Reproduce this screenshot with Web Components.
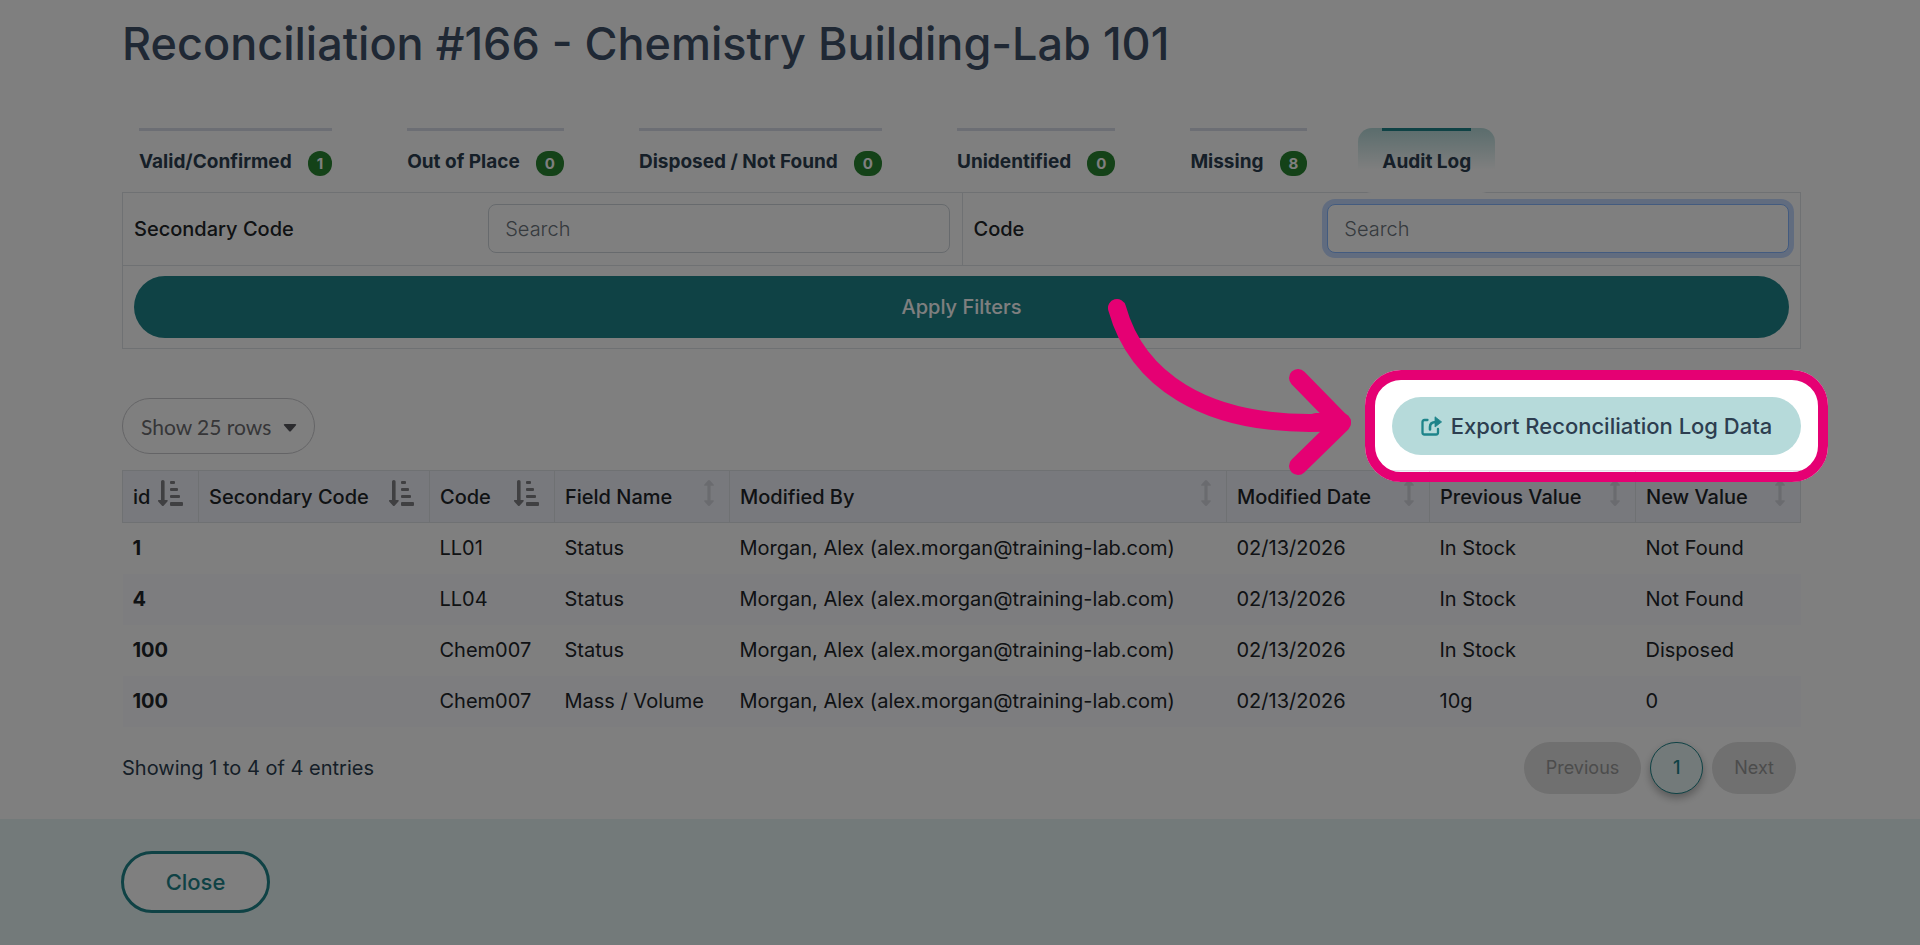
<!DOCTYPE html>
<html lang="en">
<head>
<meta charset="utf-8">
<title>Reconciliation #166</title>
<style>
  :root {
    --teal: #1e848a;
    --teal-light: #b6dada;
    --teal-pale: #e7f4f4;
    --ink: #2d3e50;
    --text: #212529;
    --line: #dee2e6;
    --marker: #e50073;
  }

  body {
    margin: 0;
    background: #ffffff;
    color: var(--text);
    font: 20px/24px Inter, "Liberation Sans", sans-serif;
  }
</style>
</head>
<body>

<reconciliation-page>
  <span slot="title">Reconciliation #166 - Chemistry Building-Lab 101</span>

  <tab-bar slot="tabs">
    <tab-item count="1">Valid/Confirmed</tab-item>
    <tab-item count="0">Out of Place</tab-item>
    <tab-item count="0">Disposed / Not Found</tab-item>
    <tab-item count="0">Unidentified</tab-item>
    <tab-item count="8">Missing</tab-item>
    <tab-item active>Audit Log</tab-item>
  </tab-bar>

  <filter-panel slot="filters">
    <filter-field label="Secondary Code"></filter-field>
    <filter-field label="Code" focused></filter-field>
  </filter-panel>

  <rows-select slot="toolbar"></rows-select>
  <tour-spotlight slot="toolbar">
    <export-button>Export Reconciliation Log Data</export-button>
  </tour-spotlight>

  <log-table slot="table"></log-table>

  <span slot="status">Showing 1 to 4 of 4 entries</span>
  <page-nav slot="status"></page-nav>

  <close-button slot="footer">Close</close-button>
</reconciliation-page>

<script>
class ReconciliationPage extends HTMLElement {
  constructor() {
    super();

    this.attachShadow({mode: 'open'}).innerHTML = `
      <style>
        :host {
          display: block;
        }

        main {
          padding: 14px 119px 25px 122px;
        }

        h1 {
          margin: 0 0 54px;
          font-size: 45px;
          line-height: 60px;
          font-weight: 500;
          color: #3f5068;
        }

        .toolbar {
          display: flex;
          justify-content: space-between;
          align-items: center;
          margin: 48px 0 15px;
        }

        .status {
          display: flex;
          justify-content: space-between;
          align-items: center;
          padding: 15px 5px 0 0;
          color: var(--ink);
        }

        footer {
          padding: 32px 121px;
          background: var(--teal-pale);
        }
      </style>

      <main>
        <h1><slot name="title"></slot></h1>
        <slot name="tabs"></slot>
        <slot name="filters"></slot>
        <div class="toolbar"><slot name="toolbar"></slot></div>
        <slot name="table"></slot>
        <div class="status"><slot name="status"></slot></div>
      </main>
      <footer><slot name="footer"></slot></footer>
    `;
  }
}

class TabBar extends HTMLElement {
  constructor() {
    super();

    this.attachShadow({mode: 'open'}).innerHTML = `
      <style>
        :host {
          display: block;
        }

        nav {
          display: flex;
          gap: 27px;
          margin: 0 0 -1px -7px;
        }
      </style>
      <nav><slot></slot></nav>
    `;
  }
}

class TabItem extends HTMLElement {
  constructor() {
    super();

    const count = this.getAttribute('count');
    const badge = count === null ? '' : `<span class="badge">${count}</span>`;

    this.attachShadow({mode: 'open'}).innerHTML = `
      <style>
        :host {
          display: block;
          position: relative;
          height: 65px;
          padding: 0 24px;
          border-radius: 14px;
          box-sizing: border-box;
        }

        :host([active]) {
          background: linear-gradient(var(--teal-light), #ffffff 42px);
        }

        a {
          display: flex;
          align-items: flex-start;
          gap: 16px;
          padding-top: 19px;
          border-top: 3px solid #d9dde8;
          color: var(--ink);
          font-weight: 700;
          font-size: 19px;
          line-height: 24px;
          text-decoration: none;
          white-space: nowrap;
        }

        :host([active]) a {
          border-color: var(--teal);
        }

        .badge {
          padding: 0 9px;
          margin-top: 1px;
          border-radius: 12px;
          background: #288430;
          color: #ffffff;
          font-size: 15px;
          line-height: 25px;
        }
      </style>
      <a href="#"><slot></slot>${badge}</a>
    `;
  }
}

class FilterPanel extends HTMLElement {
  constructor() {
    super();

    this.attachShadow({mode: 'open'}).innerHTML = `
      <style>
        :host {
          display: block;
          border: 1px solid var(--line);
        }

        .fields {
          display: grid;
          grid-template-columns: 1fr 1fr;
          border-bottom: 1px solid var(--line);
        }

        ::slotted(:not(:first-child)) {
          border-left: 1px solid var(--line);
        }

        .apply {
          padding: 10px 11px;
        }

        button {
          display: block;
          width: 100%;
          height: 62px;
          border: 0;
          border-radius: 31px;
          background: var(--teal);
          color: #ffffff;
          font: inherit;
          font-weight: 500;
          cursor: pointer;
        }
      </style>
      <div class="fields"><slot></slot></div>
      <div class="apply"><button type="button">Apply Filters</button></div>
    `;
  }
}

class FilterField extends HTMLElement {
  constructor() {
    super();

    this.attachShadow({mode: 'open'}).innerHTML = `
      <style>
        :host {
          display: grid;
          grid-template-columns: 5fr 7fr;
          gap: 24px;
          align-items: center;
          padding: 11px 11px 12px;
        }

        label {
          font-weight: 500;
        }

        input {
          width: 100%;
          height: 49px;
          padding: 0 16px;
          box-sizing: border-box;
          border: 1px solid #ced4da;
          border-radius: 8px;
          background: #ffffff;
          color: var(--text);
          font: inherit;
          outline: none;
        }

        input::placeholder {
          color: #6c757d;
          font-weight: 300;
        }

        :host([focused]) input {
          border-color: #86b7fe;
          box-shadow: 0 0 0 5px #c3d9ff;
        }
      </style>
      <label for="field">${this.getAttribute('label')}</label>
      <input id="field" type="text" placeholder="Search">
    `;
  }
}

class RowsSelect extends HTMLElement {
  constructor() {
    super();

    this.attachShadow({mode: 'open'}).innerHTML = `
      <style>
        :host {
          display: grid;
          align-items: center;
        }

        select,
        svg {
          grid-area: 1 / 1;
        }

        select {
          appearance: none;
          width: 193px;
          height: 56px;
          padding: 0 18px;
          border: 1px solid #c9c9cd;
          border-radius: 28px;
          background: #ffffff;
          color: #6c6c70;
          font: 21px Lato, sans-serif;
        }

        svg {
          justify-self: end;
          margin: 3px 18px 0 0;
          pointer-events: none;
        }
      </style>
      <select aria-label="Rows per page">
        <option>Show 25 rows</option>
        <option>Show 50 rows</option>
        <option>Show 100 rows</option>
      </select>
      <svg width="14" height="8" viewBox="0 0 14 8"><path d="M2 0h10q2 0 .8 1.500l-4.800 5.600q-1 1-2 0l-4.800-5.600q-1.200-1.500.8-1.500z" fill="#57575d"/></svg>
    `;
  }
}

class ExportButton extends HTMLElement {
  constructor() {
    super();

    this.attachShadow({mode: 'open'}).innerHTML = `
      <style>
        :host {
          display: block;
        }

        button {
          display: flex;
          align-items: center;
          justify-content: center;
          gap: 9px;
          min-width: 409px;
          height: 58px;
          padding: 0 27px;
          border: 0;
          border-radius: 29px;
          background: var(--teal-light);
          color: var(--ink);
          font: inherit;
          font-size: 22px;
          font-weight: 500;
          white-space: nowrap;
          cursor: pointer;
        }
      </style>
      <button type="button">
        <svg width="21" height="20" viewBox="0 0 21 20" fill="none">
          <path d="M6.500 4H3.500Q1.500 4 1.500 6v10.500q0 2 2 2H15q2 0 2-2V13" stroke="#1e848a" stroke-width="2.300" stroke-linecap="round"/>
          <path d="M9 13.500V11Q9 6 15 6" stroke="#1e848a" stroke-width="2.600" stroke-linecap="round"/>
          <path d="M14 .800v10.200l6.600-5.100z" fill="#1e848a" stroke="#1e848a" stroke-width=".8" stroke-linejoin="round"/>
        </svg>
        <slot></slot>
      </button>
    `;
  }
}

// Dims the whole page except for the slotted control and points an arrow at it
class TourSpotlight extends HTMLElement {
  constructor() {
    super();

    this.attachShadow({mode: 'open'}).innerHTML = `
      <style>
        :host {
          display: block;
          position: relative;
          z-index: 10;
        }

        .ring {
          position: absolute;
          inset: -27px;
          border: 10px solid var(--marker);
          border-radius: 36px;
          box-shadow: 0 0 0 3000px rgba(0, 0, 0, .5);
          pointer-events: none;
        }

        svg {
          position: absolute;
          right: 442px;
          top: -99px;
          pointer-events: none;
        }
      </style>
      <slot></slot>
      <div class="ring"></div>
      <svg width="252" height="180" viewBox="27 18 252 180" fill="none" stroke="#e50073" stroke-width="18" stroke-linecap="round" stroke-linejoin="round">
        <path d="M37 28C55 93 118 151 258 142"/>
        <path d="M218 98l44 45-44 43"/>
        <path d="M236 142h26"/>
      </svg>
    `;
  }
}

const AMOUNT_ICON = `
  <svg class="amount" width="25" height="26" viewBox="0 0 25 26" fill="#808084">
    <path d="M3 1.500q0-1.500 1.800-1.500t1.800 1.500v18.500h2.200q1.700 0 .6 1.400l-3.600 4q-1 1-2 0l-3.600-4q-1-1.400.6-1.400h2.200z"/>
    <rect x="12" y="1" width="5" height="3" rx="1"/>
    <rect x="12" y="8" width="8" height="3" rx="1"/>
    <rect x="12" y="15" width="10" height="3" rx="1"/>
    <rect x="12" y="22" width="13" height="4" rx="1"/>
  </svg>`;

const SORT_ICON = `
  <svg class="sort" width="10" height="26" viewBox="0 0 10 26" fill="#d5d7de">
    <path d="M5 0q.6 0 1 .5l3.600 4q.8 1.300-.6 1.300h-2.400v14.400h2.400q1.400 0 .6 1.300l-3.600 4q-1 1-2 0l-3.600-4q-.8-1.300.6-1.300h2.400v-14.400h-2.400q-1.400 0-.6-1.300l3.600-4q.4-.5 1-.5z"/>
  </svg>`;

const COLUMNS = [
  {name: 'id', width: 76, icon: AMOUNT_ICON},
  {name: 'Secondary Code', width: 231, icon: AMOUNT_ICON},
  {name: 'Code', width: 125, icon: AMOUNT_ICON},
  {name: 'Field Name', width: 175, icon: SORT_ICON},
  {name: 'Modified By', icon: SORT_ICON},
  {name: 'Modified Date', width: 203, icon: SORT_ICON},
  {name: 'Previous Value', width: 206, icon: SORT_ICON},
  {name: 'New Value', width: 165, icon: SORT_ICON}
];

const USER = 'Morgan, Alex (alex.morgan@training-lab.com)';

const ROWS = [
  ['1', '', 'LL01', 'Status', USER, '02/13/2026', 'In Stock', 'Not Found'],
  ['4', '', 'LL04', 'Status', USER, '02/13/2026', 'In Stock', 'Not Found'],
  ['100', '', 'Chem007', 'Status', USER, '02/13/2026', 'In Stock', 'Disposed'],
  ['100', '', 'Chem007', 'Mass / Volume', USER, '02/13/2026', '10g', '0']
];

class LogTable extends HTMLElement {
  constructor() {
    super();

    this.attachShadow({mode: 'open'}).innerHTML = `
      <style>
        :host {
          display: block;
        }

        table {
          width: 100%;
          table-layout: fixed;
          border-collapse: collapse;
        }

        th,
        td {
          padding: 0 10px;
          text-align: left;
          white-space: nowrap;
        }

        thead th {
          height: 51px;
          padding-right: 15px;
          border: 1px solid var(--line);
          background: #f0f2fa;
          font-weight: 500;
        }

        .head {
          display: flex;
          align-items: center;
          justify-content: space-between;
        }

        .head svg {
          flex: none;
          margin-bottom: 8px;
        }

        tbody th,
        tbody td {
          height: 49px;
          padding-bottom: 2px;
        }

        tbody th {
          font-weight: 700;
        }

        tbody tr:nth-child(even) {
          background: #fafaff;
        }
      </style>
      <table>
        <colgroup>${COLUMNS.map(this.renderCol).join('')}</colgroup>
        <thead><tr>${COLUMNS.map(this.renderHead).join('')}</tr></thead>
        <tbody>${ROWS.map(this.renderRow).join('')}</tbody>
      </table>
    `;
  }

  renderCol({width}) {
    return width ? `<col style="width: ${width}px">` : '<col>';
  }

  renderHead({name, icon}) {
    return `<th scope="col"><div class="head">${name}${icon}</div></th>`;
  }

  renderRow([id, ...cells]) {
    return `<tr><th scope="row">${id}</th>${cells.map(cell => `<td>${cell}</td>`).join('')}</tr>`;
  }
}

class PageNav extends HTMLElement {
  constructor() {
    super();

    this.attachShadow({mode: 'open'}).innerHTML = `
      <style>
        :host {
          display: block;
        }

        nav {
          display: flex;
          gap: 9px;
        }

        button {
          height: 52px;
          padding: 0 22px;
          border: 0;
          border-radius: 26px;
          background: #e0e0e0;
          color: #999999;
          font: inherit;
          font-size: 18px;
        }

        .current {
          width: 53px;
          padding: 0;
          border: 1px solid var(--teal);
          background: var(--teal-pale);
          box-shadow: 0 4px 8px rgba(0, 0, 0, .3);
          color: var(--teal);
          font-weight: 500;
        }
      </style>
      <nav>
        <button type="button" disabled>Previous</button>
        <button type="button" class="current" aria-current="page">1</button>
        <button type="button" disabled>Next</button>
      </nav>
    `;
  }
}

class CloseButton extends HTMLElement {
  constructor() {
    super();

    this.attachShadow({mode: 'open'}).innerHTML = `
      <style>
        :host {
          display: block;
        }

        button {
          display: block;
          min-width: 149px;
          height: 62px;
          padding: 0 40px;
          border: 3px solid var(--teal);
          border-radius: 31px;
          background: #ffffff;
          color: var(--teal);
          font: inherit;
          font-size: 22px;
          font-weight: 500;
          cursor: pointer;
        }
      </style>
      <button type="button"><slot></slot></button>
    `;
  }
}

customElements.define('reconciliation-page', ReconciliationPage);
customElements.define('tab-bar', TabBar);
customElements.define('tab-item', TabItem);
customElements.define('filter-panel', FilterPanel);
customElements.define('filter-field', FilterField);
customElements.define('rows-select', RowsSelect);
customElements.define('export-button', ExportButton);
customElements.define('tour-spotlight', TourSpotlight);
customElements.define('log-table', LogTable);
customElements.define('page-nav', PageNav);
customElements.define('close-button', CloseButton);
</script>
</body>
</html>
